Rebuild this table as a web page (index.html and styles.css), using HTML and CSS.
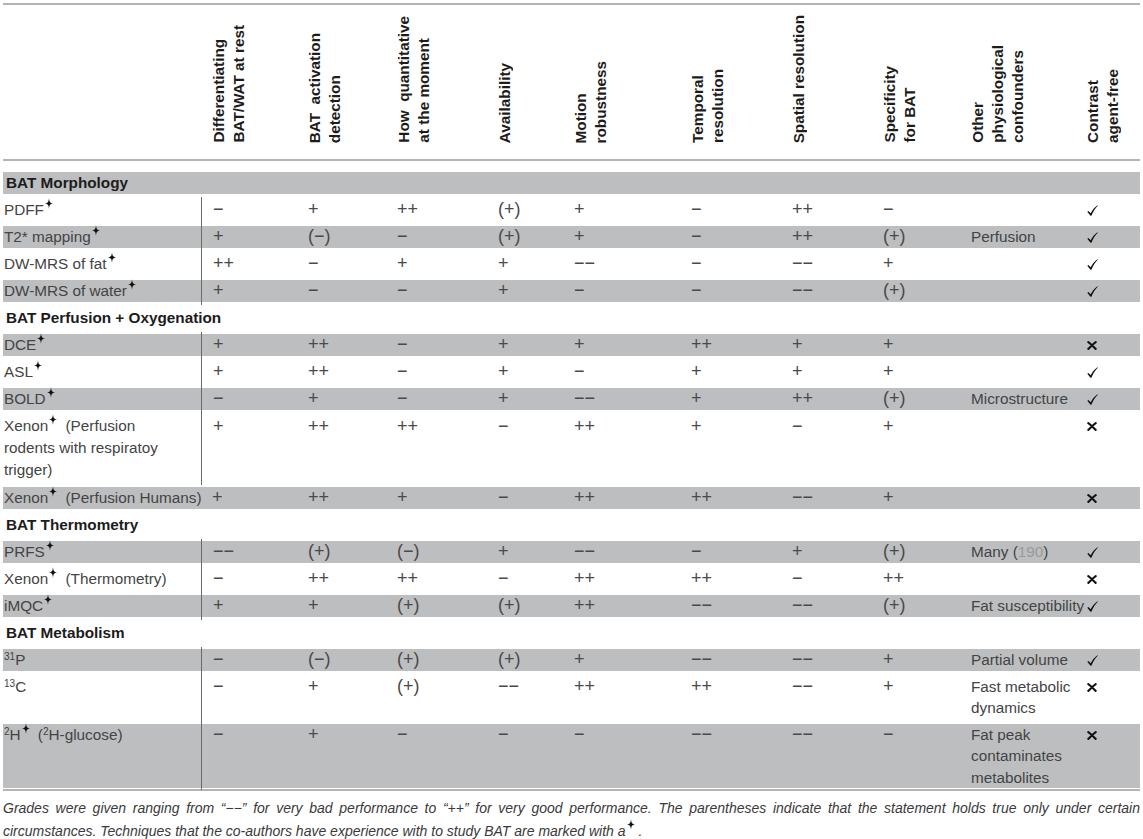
FILE: index.html
```html
<!DOCTYPE html>
<html>
<head>
<meta charset="utf-8">
<title>MRI techniques for BAT</title>
<link rel="stylesheet" href="styles.css">
</head>
<body>
<svg width="0" height="0" class="defs" aria-hidden="true">
  <defs>
    <path id="star" d="M4 0 C4.3 3.6 4.8 4.9 8 5.5 C4.8 6.1 4.3 7.4 4 11 C3.7 7.4 3.2 6.1 0 5.5 C3.2 4.9 3.7 3.6 4 0Z"/>
  </defs>
</svg>
<table class="tbl">
  <colgroup>
    <col class="w0"><col class="w1"><col class="w2"><col class="w3"><col class="w4"><col class="w5"><col class="w6"><col class="w7"><col class="w8"><col class="w9"><col class="w10">
  </colgroup>
  <thead>
    <tr>
      <th></th>
      <th><div class="rot">Differentiating<br>BAT/WAT at rest</div></th>
      <th><div class="rot">BAT&nbsp; activation<br>detection</div></th>
      <th><div class="rot">How&nbsp; quantitative<br>at the moment</div></th>
      <th><div class="rot">Availability</div></th>
      <th><div class="rot">Motion<br>robustness</div></th>
      <th><div class="rot">Temporal<br>resolution</div></th>
      <th><div class="rot">Spatial resolution</div></th>
      <th><div class="rot">Specificity<br>for BAT</div></th>
      <th><div class="rot">Other<br>physiological<br>confounders</div></th>
      <th><div class="rot">Contrast<br>agent-free</div></th>
    </tr>
  </thead>
  <tbody>
    <tr class="sec g first"><td colspan="11">BAT Morphology</td></tr>
    <tr>
      <td class="name">PDFF<svg class="st" viewBox="0 0 8 11"><use href="#star"/></svg></td>
      <td class="d">−</td><td>+</td><td>++</td><td>(+)</td><td>+</td><td>−</td><td>++</td><td>−</td><td></td>
      <td><svg class="ok" viewBox="0 0 11 11"><path d="M0.3 6.8 L1.4 5.9 L3.7 8.2 C5.3 5.2 7.6 2.4 10.4 0.3 L10.8 0.8 C8.3 3.3 6.1 6.6 4.4 10.7 L3.5 10.7 Z"/></svg></td>
    </tr>
    <tr class="g">
      <td class="name">T2* mapping<svg class="st" viewBox="0 0 8 11"><use href="#star"/></svg></td>
      <td class="d">+</td><td>(−)</td><td>−</td><td>(+)</td><td>+</td><td>−</td><td>++</td><td>(+)</td><td>Perfusion</td>
      <td><svg class="ok" viewBox="0 0 11 11"><path d="M0.3 6.8 L1.4 5.9 L3.7 8.2 C5.3 5.2 7.6 2.4 10.4 0.3 L10.8 0.8 C8.3 3.3 6.1 6.6 4.4 10.7 L3.5 10.7 Z"/></svg></td>
    </tr>
    <tr>
      <td class="name">DW-MRS of fat<svg class="st" viewBox="0 0 8 11"><use href="#star"/></svg></td>
      <td class="d">++</td><td>−</td><td>+</td><td>+</td><td>−−</td><td>−</td><td>−−</td><td>+</td><td></td>
      <td><svg class="ok" viewBox="0 0 11 11"><path d="M0.3 6.8 L1.4 5.9 L3.7 8.2 C5.3 5.2 7.6 2.4 10.4 0.3 L10.8 0.8 C8.3 3.3 6.1 6.6 4.4 10.7 L3.5 10.7 Z"/></svg></td>
    </tr>
    <tr class="g">
      <td class="name">DW-MRS of water<svg class="st" viewBox="0 0 8 11"><use href="#star"/></svg></td>
      <td class="d">+</td><td>−</td><td>−</td><td>+</td><td>−</td><td>−</td><td>−−</td><td>(+)</td><td></td>
      <td><svg class="ok" viewBox="0 0 11 11"><path d="M0.3 6.8 L1.4 5.9 L3.7 8.2 C5.3 5.2 7.6 2.4 10.4 0.3 L10.8 0.8 C8.3 3.3 6.1 6.6 4.4 10.7 L3.5 10.7 Z"/></svg></td>
    </tr>
    <tr class="sec"><td colspan="11">BAT Perfusion + Oxygenation</td></tr>
    <tr class="g">
      <td class="name">DCE<svg class="st" viewBox="0 0 8 11"><use href="#star"/></svg></td>
      <td class="d">+</td><td>++</td><td>−</td><td>+</td><td>+</td><td>++</td><td>+</td><td>+</td><td></td>
      <td><svg class="no" viewBox="0 0 10 9"><path d="M1.3 1.1 C3.6 2.6 6.4 5.8 8.7 7.9 M8.7 1.1 C6.4 2.6 3.6 5.8 1.3 7.9"/></svg></td>
    </tr>
    <tr>
      <td class="name">ASL<svg class="st" viewBox="0 0 8 11"><use href="#star"/></svg></td>
      <td class="d">+</td><td>++</td><td>−</td><td>+</td><td>−</td><td>+</td><td>+</td><td>+</td><td></td>
      <td><svg class="ok" viewBox="0 0 11 11"><path d="M0.3 6.8 L1.4 5.9 L3.7 8.2 C5.3 5.2 7.6 2.4 10.4 0.3 L10.8 0.8 C8.3 3.3 6.1 6.6 4.4 10.7 L3.5 10.7 Z"/></svg></td>
    </tr>
    <tr class="g">
      <td class="name">BOLD<svg class="st" viewBox="0 0 8 11"><use href="#star"/></svg></td>
      <td class="d">−</td><td>+</td><td>−</td><td>+</td><td>−−</td><td>+</td><td>++</td><td>(+)</td><td>Microstructure</td>
      <td><svg class="ok" viewBox="0 0 11 11"><path d="M0.3 6.8 L1.4 5.9 L3.7 8.2 C5.3 5.2 7.6 2.4 10.4 0.3 L10.8 0.8 C8.3 3.3 6.1 6.6 4.4 10.7 L3.5 10.7 Z"/></svg></td>
    </tr>
    <tr class="tall">
      <td class="name">Xenon<svg class="st sp" viewBox="0 0 8 11"><use href="#star"/></svg> (Perfusion rodents with respiratoy trigger)</td>
      <td class="d">+</td><td>++</td><td>++</td><td>−</td><td>++</td><td>+</td><td>−</td><td>+</td><td></td>
      <td><svg class="no" viewBox="0 0 10 9"><path d="M1.3 1.1 C3.6 2.6 6.4 5.8 8.7 7.9 M8.7 1.1 C6.4 2.6 3.6 5.8 1.3 7.9"/></svg></td>
    </tr>
    <tr class="g">
      <td class="name nw">Xenon<svg class="st sp" viewBox="0 0 8 11"><use href="#star"/></svg> (Perfusion Humans)</td>
      <td>+</td><td>++</td><td>+</td><td>−</td><td>++</td><td>++</td><td>−−</td><td>+</td><td></td>
      <td><svg class="no" viewBox="0 0 10 9"><path d="M1.3 1.1 C3.6 2.6 6.4 5.8 8.7 7.9 M8.7 1.1 C6.4 2.6 3.6 5.8 1.3 7.9"/></svg></td>
    </tr>
    <tr class="sec"><td colspan="11">BAT Thermometry</td></tr>
    <tr class="g">
      <td class="name">PRFS<svg class="st" viewBox="0 0 8 11"><use href="#star"/></svg></td>
      <td class="d">−−</td><td>(+)</td><td>(−)</td><td>+</td><td>−−</td><td>−</td><td>+</td><td>(+)</td><td>Many (<span class="ref">190</span>)</td>
      <td><svg class="ok" viewBox="0 0 11 11"><path d="M0.3 6.8 L1.4 5.9 L3.7 8.2 C5.3 5.2 7.6 2.4 10.4 0.3 L10.8 0.8 C8.3 3.3 6.1 6.6 4.4 10.7 L3.5 10.7 Z"/></svg></td>
    </tr>
    <tr>
      <td class="name">Xenon<svg class="st sp" viewBox="0 0 8 11"><use href="#star"/></svg> (Thermometry)</td>
      <td class="d">−</td><td>++</td><td>++</td><td>−</td><td>++</td><td>++</td><td>−</td><td>++</td><td></td>
      <td><svg class="no" viewBox="0 0 10 9"><path d="M1.3 1.1 C3.6 2.6 6.4 5.8 8.7 7.9 M8.7 1.1 C6.4 2.6 3.6 5.8 1.3 7.9"/></svg></td>
    </tr>
    <tr class="g">
      <td class="name">iMQC<svg class="st" viewBox="0 0 8 11"><use href="#star"/></svg></td>
      <td class="d">+</td><td>+</td><td>(+)</td><td>(+)</td><td>++</td><td>−−</td><td>−−</td><td>(+)</td><td class="nw">Fat susceptibility</td>
      <td><svg class="ok" viewBox="0 0 11 11"><path d="M0.3 6.8 L1.4 5.9 L3.7 8.2 C5.3 5.2 7.6 2.4 10.4 0.3 L10.8 0.8 C8.3 3.3 6.1 6.6 4.4 10.7 L3.5 10.7 Z"/></svg></td>
    </tr>
    <tr class="sec"><td colspan="11">BAT Metabolism</td></tr>
    <tr class="g">
      <td class="name"><sup>31</sup>P</td>
      <td class="d">−</td><td>(−)</td><td>(+)</td><td>(+)</td><td>+</td><td>−−</td><td>−−</td><td>+</td><td>Partial volume</td>
      <td><svg class="ok" viewBox="0 0 11 11"><path d="M0.3 6.8 L1.4 5.9 L3.7 8.2 C5.3 5.2 7.6 2.4 10.4 0.3 L10.8 0.8 C8.3 3.3 6.1 6.6 4.4 10.7 L3.5 10.7 Z"/></svg></td>
    </tr>
    <tr>
      <td class="name"><sup>13</sup>C</td>
      <td class="d">−</td><td>+</td><td>(+)</td><td>−−</td><td>++</td><td>++</td><td>−−</td><td>+</td><td>Fast metabolic dynamics</td>
      <td><svg class="no" viewBox="0 0 10 9"><path d="M1.3 1.1 C3.6 2.6 6.4 5.8 8.7 7.9 M8.7 1.1 C6.4 2.6 3.6 5.8 1.3 7.9"/></svg></td>
    </tr>
    <tr class="g last">
      <td class="name"><sup>2</sup>H<svg class="st sp" viewBox="0 0 8 11"><use href="#star"/></svg> (<sup>2</sup>H-glucose)</td>
      <td class="d">−</td><td>+</td><td>−</td><td>−</td><td>−</td><td>−−</td><td>−−</td><td>−</td><td>Fat peak contaminates metabolites</td>
      <td><svg class="no" viewBox="0 0 10 9"><path d="M1.3 1.1 C3.6 2.6 6.4 5.8 8.7 7.9 M8.7 1.1 C6.4 2.6 3.6 5.8 1.3 7.9"/></svg></td>
    </tr>
  </tbody>
</table>
<p class="note">Grades were given ranging from “−−” for very bad performance to “++” for very good performance. The parentheses indicate that the statement holds true only under certain circumstances. Techniques that the co-authors have experience with to study BAT are marked with a<svg class="st" viewBox="0 0 8 11"><use href="#star"/></svg> .</p>
</body>
</html>
```

FILE: styles.css
```css
html, body {
  margin: 0;
  background: #ffffff;
}

body {
  padding: 3px;
  font-family: "Liberation Sans", Arial, sans-serif;
  color: #444444;
}

.defs {
  position: absolute;
  width: 0;
  height: 0;
}

.tbl {
  width: 1137px;
  table-layout: fixed;
  border-collapse: separate;
  border-spacing: 0;
  font-size: 15.3px;
  line-height: 21.2px;
}

.w0 { width: 198px; }
.w1 { width: 96px; }
.w2 { width: 89px; }
.w3 { width: 101px; }
.w4 { width: 76px; }
.w5 { width: 117px; }
.w6 { width: 101px; }
.w7 { width: 91px; }
.w8 { width: 88px; }
.w9 { width: 115px; }
.w10 { width: 65px; }

.tbl th {
  box-sizing: border-box;
  height: 158px;
  border-top: 2px solid #b4b4b4;
  border-bottom: 2px solid #b4b4b4;
  padding: 4px 2px 16px 8px;
  vertical-align: bottom;
  text-align: left;
  font-weight: bold;
  color: #1c1c1c;
}

.rot {
  writing-mode: vertical-rl;
  transform: rotate(180deg);
  line-height: 20px;
  white-space: nowrap;
}

.tbl td {
  --pt: 2.4px;
  --pb: 3.4px;
  padding: var(--pt) 2px var(--pb) 11px;
  vertical-align: top;
}

.tbl tbody td:nth-child(n+2):nth-child(-n+9) {
  font-size: 18px;
  color: #4a4a4a;
}

.tbl tr.first td {
  --pt: 11.4px;
}

.tbl tr.tall td {
  line-height: 22px;
}

.tbl tr.last td {
  --pb: 1.4px;
  border-bottom: 2px solid #b4b4b4;
}

.tbl tr.g td {
  background: linear-gradient(to bottom,
    transparent calc(var(--pt) - 0.4px),
    #bcbec0 calc(var(--pt) - 0.4px),
    #bcbec0 calc(100% - var(--pb) + 0.4px),
    transparent calc(100% - var(--pb) + 0.4px));
}

.tbl td.name {
  padding-left: 1px;
  padding-right: 25px;
}

.tbl tr.sec td {
  padding-left: 3px;
  font-weight: bold;
  color: #1c1c1c;
}

.tbl td.d {
  border-left: 1px solid #6a6a6a;
}

.nw {
  white-space: nowrap;
}

.st {
  width: 8px;
  height: 11px;
  vertical-align: 6px;
  margin-top: -4px;
  margin-left: 1px;
  fill: #111111;
}

.st.sp {
  margin-right: 4px;
}

sup {
  font-size: 10px;
  line-height: 0;
  vertical-align: 5px;
}

.ref {
  color: #9a9a9a;
}

.ok {
  width: 11px;
  height: 11px;
  vertical-align: -1px;
  margin-left: 1px;
  fill: #111111;
}

.no {
  width: 10px;
  height: 9px;
  vertical-align: 0;
  margin-left: 1px;
  fill: none;
  stroke: #111111;
  stroke-width: 2.1;
  stroke-linecap: round;
}

.note {
  margin: 6px 0 0;
  font-size: 14px;
  line-height: 23px;
  font-style: italic;
  text-align: justify;
  color: #3a3a3a;
}
```
